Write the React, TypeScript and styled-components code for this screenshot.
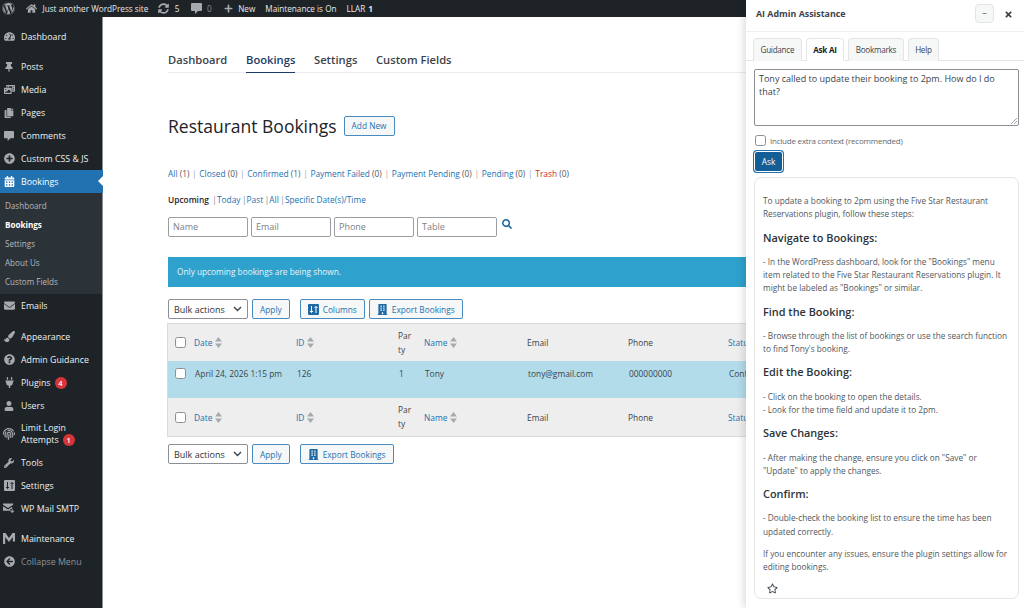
import React from "react";
import styled, { createGlobalStyle } from "styled-components";
import {
  FaWordpress, FaHome, FaSyncAlt, FaPlus, FaTachometerAlt, FaThumbtack, FaPhotoVideo, FaCopy,
  FaPlusCircle, FaCalendarAlt, FaEnvelope, FaPaintBrush, FaQuestionCircle, FaPlug, FaUser, FaFingerprint,
  FaWrench, FaArrowCircleLeft, FaSearch, FaBuilding, FaRegStar, FaTimes,
} from "react-icons/fa";

const font = `"Open Sans", "Noto Sans", "Liberation Sans", sans-serif`;

const Global = createGlobalStyle`
  html, body { margin: 0; padding: 0; height: 608px; overflow: hidden; background: #fff; }
  body { font-family: ${font}; color: #3c434a; }
  * { box-sizing: border-box; }
`;

const Page = styled.div`
  position: relative; width: 1024px; height: 608px; overflow: hidden;
  display: flex; flex-direction: column;
`;
const AdminBar = styled.header`
  height: 17px; flex: none; background: #1d2327; color: #e8e8e9; display: flex; align-items: center;
  font-size: 8.2px; padding-left: 2px;
`;
const BarItem = styled.span<{ $gap?: number; $ml?: number; $dim?: boolean }>`
  display: inline-flex; align-items: center; gap: ${(p) => p.$gap ?? 5.5}px; margin-left: ${(p) => p.$ml ?? 0}px;
  color: ${(p) => (p.$dim ? "#8c8f94" : "#e8e8e9")}; white-space: nowrap;
  svg { color: #a7aaad; flex: none; }
`;
const Body = styled.div`flex: 1; display: flex; min-height: 0;`;
const Sidebar = styled.nav`
  width: 103px; flex: none; background: #1d2327; padding-top: 8px; border-right: 1px solid #8b8f94;
`;
const MenuRow = styled.div<{ $active?: boolean; $tall?: boolean; $sep?: number; $dim?: boolean }>`
  position: relative; display: flex; align-items: center; width: 103px;
  height: ${(p) => (p.$tall ? 34 : 23)}px; margin-top: ${(p) => p.$sep ?? 0}px; padding-left: 3px;
  background: ${(p) => (p.$active ? "#2271b1" : "transparent")};
  color: ${(p) => (p.$active ? "#fff" : p.$dim ? "#8f9296" : "#eef0f1")};
  font-size: 8.8px; line-height: 12px;
  ${(p) => p.$active && `&::after { content: ""; position: absolute; right: 0; top: 6px; border: 5.5px solid transparent; border-right-color: #fff; border-left-width: 0; }`}
`;
const MenuIcon = styled.span<{ $active?: boolean }>`
  width: 12px; height: 14px; flex: none; margin-right: 6px; display: flex; align-items: center; justify-content: center;
  color: ${(p) => (p.$active ? "#fff" : "#a7aaad")};
`;
const Badge = styled.b`
  display: inline-block; width: 12px; height: 12px; margin-left: 4px; border-radius: 50%; background: #d63638; color: #fff;
  font-size: 7.5px; line-height: 12px; text-align: center; vertical-align: middle; font-weight: 600;
`;
const Submenu = styled.div`
  background: #2c3338; height: 101px; padding-top: 3px; width: 102px;
`;
const SubItem = styled.div<{ $on?: boolean }>`
  height: 19px; padding-left: 5px; display: flex; align-items: center; font-size: 8.1px;
  color: ${(p) => (p.$on ? "#fff" : "#b4b9be")}; font-weight: ${(p) => (p.$on ? 700 : 400)};
`;
const Main = styled.main`flex: 1; min-width: 0; overflow: hidden; padding: 35px 0 0 65px; background: #fff;`;
const TopTabs = styled.div`
  display: flex; gap: 18.7px; height: 21px; border-bottom: 1px solid #ececec; width: 640px;
`;
const TopTab = styled.div<{ $on?: boolean }>`
  font-size: 11.2px; font-weight: 600; line-height: 15px; height: 21px;
  color: ${(p) => (p.$on ? "#1d3a66" : "#3c434a")};
  ${(p) => p.$on && "border-bottom: 1px solid #1d3a66;"}
`;
const TitleRow = styled.div`display: flex; align-items: center; gap: 7px; margin-top: 39px; height: 27px;`;
const Title = styled.h1`margin: 0; font-size: 17.5px; font-weight: 400; color: #1d2327;`;
const Button = styled.span`
  display: inline-flex; align-items: center; justify-content: center; gap: 4px; height: 20px; padding: 0 7px;
  border: 1px solid #4a8bbf; border-radius: 2px; background: #f6f7f7; color: #2271b1; font-size: 8.3px; white-space: nowrap;
  svg { flex: none; color: #1f6aa5; }
`;
const Filters = styled.div`margin-top: 29px; font-size: 8.35px; line-height: 12px; color: #50575e; white-space: nowrap;`;
const Filter = styled.span<{ $red?: boolean }>`color: ${(p) => (p.$red ? "#c92c2e" : "#2271b1")};`;
const Sep = styled.i`color: #a7aaad; font-style: normal; margin: 0 2.7px;`;
const Scope = styled.div`margin-top: 14px; font-size: 8.35px; line-height: 12px; color: #2271b1; white-space: nowrap;`;
const ScopeOn = styled.b`color: #1d2327; font-weight: 600; margin-right: 2px;`;
const ScopeSep = styled.i`color: #8c8f94; font-style: normal; margin: 0 0 0 1.5px;`;
const SearchRow = styled.div`display: flex; align-items: flex-start; gap: 3px; margin-top: 11px;`;
const Field = styled.div`
  width: 80px; height: 20px; border: 1px solid #9a9ea3; border-radius: 2px; padding: 0 4px; font-size: 9px; line-height: 18px; color: #7d8185;
`;
const SearchIcon = styled.span`margin: 0 0 0 2px; color: #22689f; display: flex; padding-top: 2px;`;
const Notice = styled.div`
  margin-top: 20px; width: 640px; height: 30px; background: #2ea2cc; color: #e8f5fa; font-size: 8.3px; line-height: 30px; padding-left: 9px;
`;
const Actions = styled.div<{ $top: number }>`
  display: flex; align-items: center; gap: 4px; margin-top: ${(p) => p.$top}px;
`;
const Select = styled.span`
  width: 80px; height: 20px; border: 1px solid #8c8f94; border-radius: 2px; display: flex; align-items: center; justify-content: space-between;
  padding: 0 5px; font-size: 9px; color: #2c3338; background: #fff;
`;
const ActionGap = styled.span`width: 2px;`;
const Table = styled.div`
  width: 640px; border: 1px solid #dcdcde; border-width: 1px 0 1px 1px; background: #eee; margin: 4px 0 0 -1px;
`;
const Row = styled.div<{ $data?: boolean; $h: number }>`
  display: grid; grid-template-columns: 26px 102px 102px 26px 103px 101px 100px 18px; height: ${(p) => p.$h}px;
  align-items: ${(p) => (p.$data ? "start" : "center")}; padding-top: ${(p) => (p.$data ? 7 : 0)}px;
  background: ${(p) => (p.$data ? "#b2dcea" : "#eee")}; font-size: 8.4px; color: #3c434a;
`;
const CheckCell = styled.div`padding-left: 7px; display: flex;`;
const Check = styled.span`
  display: block; flex: none; width: 11px; height: 11px; border: 1px solid #8c8f94; border-radius: 2.5px; background: #fff;
`;
const Head = styled.div<{ $link?: boolean }>`
  display: flex; align-items: center; gap: 3px; color: ${(p) => (p.$link ? "#2271b1" : "#3c434a")}; white-space: nowrap;
  min-width: 0; overflow: hidden;
`;
const PartyHead = styled.div`width: 15.5px; word-break: break-all; line-height: 14px; color: #3c434a;`;
const Cell = styled.div`padding-left: 1px; white-space: nowrap; line-height: 12px; min-width: 0; overflow: hidden;`;
const Panel = styled.aside`
  position: absolute; top: 0; right: 0; width: 278px; height: 608px; background: #fff; box-shadow: -3px 0 7px rgba(0,0,0,.12);
  display: flex; flex-direction: column;
`;
const PanelHead = styled.div`
  height: 32px; flex: none; border-bottom: 1px solid #f0f0f1; display: flex; align-items: flex-start; padding: 4px 11px 0 10px;
`;
const PanelTitle = styled.div`font-size: 8.9px; font-weight: 700; color: #3c434a; flex: 1; line-height: 18px; margin-top: 1px;`;
const MinBtn = styled.span`
  width: 19px; height: 19px; border: 1px solid #e4e4e4; border-radius: 4px; background: #f6f7f7; color: #50575e; font-size: 9px; line-height: 16px; text-align: center;
`;
const CloseBtn = styled.span`margin: 6px 0 0 10px; width: 9px; display: flex; color: #3c434a;`;
const PanelTabs = styled.div`
  flex: none; display: flex; gap: 4px; padding: 6px 0 0 7px; height: 29px; border-bottom: 1px solid #e5e5e5;
`;
const PanelTab = styled.div<{ $on?: boolean }>`
  height: 23px; padding: 0 6.5px; border: 1px solid #e5e5e5; border-bottom: ${(p) => (p.$on ? "1px solid #fff" : "0")}; border-radius: 4px 4px 0 0;
  background: ${(p) => (p.$on ? "#fff" : "#f6f7f7")}; color: ${(p) => (p.$on ? "#1d2327" : "#3c434a")};
  font-size: 8.1px; letter-spacing: -0.25px; font-weight: ${(p) => (p.$on ? 700 : 400)}; line-height: 22px;
`;
const PanelBody = styled.div`flex: 1; padding: 8px 5px 0 8px; min-height: 0;`;
const Question = styled.div`
  position: relative; height: 57px; border: 1px solid #8c8f94; border-radius: 2px; padding: 2px 4px; font-size: 9px; line-height: 13px; color: #3c434a;
`;
const Grip = styled.svg`position: absolute; right: 1px; bottom: 1px;`;
const CheckLine = styled.div`display: flex; align-items: center; gap: 4px; margin-top: 9px; padding-left: 1px; font-size: 8px; letter-spacing: -0.22px; color: #646970;`;
const AskButton = styled.div`
  margin-top: 5px; width: 29px; height: 21px; background: #135e96; color: #fff; border-radius: 3px; font-size: 8.3px; font-weight: 500; text-align: center; line-height: 19px;
  border: 1px solid #fff; box-shadow: 0 0 0 1px #2271b1;
`;
const Answer = styled.div`
  margin-top: 5px; height: 422px; border: 1px solid #e5e5e5; border-radius: 7px; padding: 16px 8px 0 8px; font-size: 8.25px; line-height: 13.1px; color: #50575e;
`;
const AnswerP = styled.p`margin: 0 0 9.35px; white-space: nowrap;`;
const AnswerH = styled.h3`margin: 0 0 9.35px; font-size: 10.9px; line-height: 16px; font-weight: 600; color: #2c3338;`;
const StarBtn = styled.div`margin: 4px 0 0 4px; color: #3c434a; display: flex;`;

const Sort = () => (
  <svg width="7" height="11" viewBox="0 0 7 11"><path d="M3.5 0L7 4.5H0zM3.500 11L0 6.500h7z" fill="#a7aaad" /></svg>
);
const Chevron = () => (
  <svg width="9" height="6" viewBox="0 0 9 6"><path d="M1 1l3.500 3.500L8 1" fill="none" stroke="#3c434a" strokeWidth="1.4" /></svg>
);
const ArrowSquare = ({ fill, stroke }: { fill: string; stroke: string }) => (
  <svg width="11" height="11" viewBox="0 0 11 11"><rect width="11" height="11" rx="1" fill={fill} /><path d="M3.500 2v6.500M2 7l1.500 1.500L5 7M8 9V2.500M6.500 4L8 2.500 9.500 4" fill="none" stroke={stroke} strokeWidth="1" /></svg>
);
const MaintIcon = () => (
  <svg width="12" height="13" viewBox="0 0 12 13"><path d="M0 12V1h2.500L6 6l3.500-5H12v8.500H9.800V5L6 10 2.200 5v7z" fill="#a7aaad" /></svg>
);
const Bubble = ({ size }: { size: number }) => (
  <svg width={size} height={size} viewBox="0 0 11 11"><path d="M1 0h9a1 1 0 0 1 1 1v6a1 1 0 0 1-1 1H7l-3 3V8H1a1 1 0 0 1-1-1V1a1 1 0 0 1 1-1z" fill="currentColor" /></svg>
);
const MailPlus = () => (
  <svg width="13" height="11" viewBox="0 0 13 11"><path d="M0 0h11v1.500L5.500 5 0 1.500zM0 3l5.500 3.500L10 3.700V6H8v2H0z" fill="#a7aaad" /><path d="M10 6.500v4M8 8.500h4" stroke="#a7aaad" strokeWidth="1.200" /></svg>
);

const menuTop: [React.ReactNode, string][] = [
  [<FaThumbtack size={10} />, "Posts"],
  [<FaPhotoVideo size={11} />, "Media"],
  [<FaCopy size={10} />, "Pages"],
  [<Bubble size={10} />, "Comments"],
  [<FaPlusCircle size={11} />, "Custom CSS & JS"],
];

const Header = ({ h }: { h: number }) => (
  <Row $h={h}>
    <CheckCell><Check /></CheckCell>
    <Head $link>Date <Sort /></Head>
    <Head $link>ID <Sort /></Head>
    <PartyHead>Party</PartyHead>
    <Head $link>Name <Sort /></Head>
    <Head>Email</Head>
    <Head>Phone</Head>
    <Head $link>Status</Head>
  </Row>
);

export default function App() {
  return (
    <Page>
      <Global />
      <AdminBar>
        <BarItem><FaWordpress size={13} /></BarItem>
        <BarItem $ml={11}><FaHome size={11} />Just another WordPress site</BarItem>
        <BarItem $ml={10}><FaSyncAlt size={11} />5</BarItem>
        <BarItem $ml={11} $dim><Bubble size={11} />0</BarItem>
        <BarItem $ml={12}><FaPlus size={9} />New</BarItem>
        <BarItem $ml={10}>Maintenance is On</BarItem>
        <BarItem $ml={10} $gap={3}>LLAR <b>1</b></BarItem>
      </AdminBar>
      <Body>
        <Sidebar>
          <MenuRow><MenuIcon><FaTachometerAlt size={11} /></MenuIcon>Dashboard</MenuRow>
          {menuTop.map(([icon, label], i) => (
            <MenuRow key={label} $sep={i === 0 ? 7 : 0}><MenuIcon>{icon}</MenuIcon>{label}</MenuRow>
          ))}
          <MenuRow $active><MenuIcon $active><FaCalendarAlt size={11} /></MenuIcon>Bookings</MenuRow>
          <Submenu>
            <SubItem>Dashboard</SubItem>
            <SubItem $on>Bookings</SubItem>
            <SubItem>Settings</SubItem>
            <SubItem>About Us</SubItem>
            <SubItem>Custom Fields</SubItem>
          </Submenu>
          <MenuRow><MenuIcon><FaEnvelope size={11} /></MenuIcon>Emails</MenuRow>
          <MenuRow $sep={8}><MenuIcon><FaPaintBrush size={11} /></MenuIcon>Appearance</MenuRow>
          <MenuRow><MenuIcon><FaQuestionCircle size={11} /></MenuIcon>Admin Guidance</MenuRow>
          <MenuRow><MenuIcon><FaPlug size={11} /></MenuIcon>Plugins<Badge>4</Badge></MenuRow>
          <MenuRow><MenuIcon><FaUser size={10} /></MenuIcon>Users</MenuRow>
          <MenuRow $tall><MenuIcon><FaFingerprint size={12} /></MenuIcon><span>Limit Login<br />Attempts<Badge>1</Badge></span></MenuRow>
          <MenuRow><MenuIcon><FaWrench size={10} /></MenuIcon>Tools</MenuRow>
          <MenuRow><MenuIcon><ArrowSquare fill="#a7aaad" stroke="#1d2327" /></MenuIcon>Settings</MenuRow>
          <MenuRow><MenuIcon><MailPlus /></MenuIcon>WP Mail SMTP</MenuRow>
          <MenuRow $sep={7}><MenuIcon><MaintIcon /></MenuIcon>Maintenance</MenuRow>
          <MenuRow $dim><MenuIcon><FaArrowCircleLeft size={11} /></MenuIcon>Collapse Menu</MenuRow>
        </Sidebar>
        <Main>
          <TopTabs>
            <TopTab>Dashboard</TopTab>
            <TopTab $on>Bookings</TopTab>
            <TopTab>Settings</TopTab>
            <TopTab>Custom Fields</TopTab>
          </TopTabs>
          <TitleRow>
            <Title>Restaurant Bookings</Title>
            <Button>Add New</Button>
          </TitleRow>
          <Filters>
            <Filter>All</Filter> (1)<Sep>|</Sep><Filter>Closed</Filter> (0)<Sep>|</Sep><Filter>Confirmed</Filter> (1)<Sep>|</Sep>
            <Filter>Payment Failed</Filter> (0)<Sep>|</Sep><Filter>Payment Pending</Filter> (0)<Sep>|</Sep><Filter>Pending</Filter> (0)<Sep>|</Sep>
            <Filter $red>Trash</Filter> (0)
          </Filters>
          <Scope>
            <ScopeOn>Upcoming</ScopeOn><ScopeSep>|</ScopeSep>Today<ScopeSep>|</ScopeSep>Past<ScopeSep>|</ScopeSep>All<ScopeSep>|</ScopeSep>Specific Date(s)/Time
          </Scope>
          <SearchRow>
            <Field>Name</Field><Field>Email</Field><Field>Phone</Field><Field>Table</Field>
            <SearchIcon><FaSearch size={10} /></SearchIcon>
          </SearchRow>
          <Notice>Only upcoming bookings are being shown.</Notice>
          <Actions $top={12}>
            <Select>Bulk actions <Chevron /></Select>
            <Button>Apply</Button>
            <ActionGap />
            <Button><ArrowSquare fill="#1f6aa5" stroke="#fff" />Columns</Button>
            <Button><FaBuilding size={11} />Export Bookings</Button>
          </Actions>
          <Table>
            <Header h={37} />
            <Row $data $h={37}>
              <CheckCell><Check /></CheckCell>
              <Cell>April 24, 2026 1:15 pm</Cell>
              <Cell>126</Cell>
              <Cell>1</Cell>
              <Cell>Tony</Cell>
              <Cell>tony@gmail.com</Cell>
              <Cell>000000000</Cell>
              <Cell>Confirmed</Cell>
            </Row>
            <Header h={38} />
          </Table>
          <Actions $top={7}>
            <Select>Bulk actions <Chevron /></Select>
            <Button>Apply</Button>
            <ActionGap />
            <Button><FaBuilding size={11} />Export Bookings</Button>
          </Actions>
        </Main>
      </Body>
      <Panel>
        <PanelHead>
          <PanelTitle>AI Admin Assistance</PanelTitle>
          <MinBtn>–</MinBtn>
          <CloseBtn><FaTimes size={9} /></CloseBtn>
        </PanelHead>
        <PanelTabs>
          <PanelTab>Guidance</PanelTab>
          <PanelTab $on>Ask AI</PanelTab>
          <PanelTab>Bookmarks</PanelTab>
          <PanelTab>Help</PanelTab>
        </PanelTabs>
        <PanelBody>
          <Question>
            Tony called to update their booking to 2pm. How do I do that?
            <Grip width="6" height="6" viewBox="0 0 6 6"><path d="M6 0L0 6M6 3L3 6" stroke="#8c8f94" strokeWidth=".8" /></Grip>
          </Question>
          <CheckLine><Check />Include extra context (recommended)</CheckLine>
          <AskButton>Ask</AskButton>
          <Answer>
            <AnswerP>To update a booking to 2pm using the Five Star Restaurant<br />Reservations plugin, follow these steps:</AnswerP>
            <AnswerH>Navigate to Bookings:</AnswerH>
            <AnswerP>- In the WordPress dashboard, look for the "Bookings" menu<br />item related to the Five Star Restaurant Reservations plugin. It<br />might be labeled as "Bookings" or similar.</AnswerP>
            <AnswerH>Find the Booking:</AnswerH>
            <AnswerP>- Browse through the list of bookings or use the search function<br />to find Tony's booking.</AnswerP>
            <AnswerH>Edit the Booking:</AnswerH>
            <AnswerP>- Click on the booking to open the details.<br />- Look for the time field and update it to 2pm.</AnswerP>
            <AnswerH>Save Changes:</AnswerH>
            <AnswerP>- After making the change, ensure you click on "Save" or<br />"Update" to apply the changes.</AnswerP>
            <AnswerH>Confirm:</AnswerH>
            <AnswerP>- Double-check the booking list to ensure the time has been<br />updated correctly.</AnswerP>
            <AnswerP>If you encounter any issues, ensure the plugin settings allow for<br />editing bookings.</AnswerP>
            <StarBtn><FaRegStar size={11} /></StarBtn>
          </Answer>
        </PanelBody>
      </Panel>
    </Page>
  );
}
